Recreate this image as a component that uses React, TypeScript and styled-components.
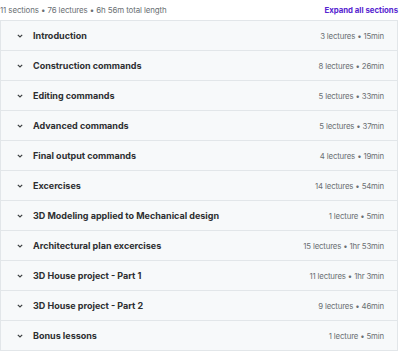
import React from "react";
import styled, { createGlobalStyle } from "styled-components";

const Global = createGlobalStyle`
  html, body { margin: 0; padding: 0; background: #ffffff; }
  body { font-family: Inter, "Noto Sans", sans-serif; color: #2d2f31; }
`;

const Wrap = styled.div`
  width: 398px;
  display: flex;
  flex-direction: column;
`;

const Header = styled.div`
  display: flex;
  align-items: center;
  justify-content: space-between;
  height: 20px;
`;

const Summary = styled.span`
  font-size: 7.9px;
  color: #6a6f73;
  letter-spacing: -0.1px;
`;

const Expand = styled.button`
  border: none;
  background: none;
  padding: 0;
  font-family: inherit;
  font-size: 7.8px;
  font-weight: 700;
  color: #5624d0;
`;

const List = styled.div`
  border: 1px solid #e2e6e9;
  border-bottom: none;
`;

const Row = styled.div`
  height: 29px;
  display: flex;
  align-items: center;
  background: #f7f9fa;
  border-bottom: 1px solid #e2e6e9;
  padding: 0 13px 0 16px;
`;

const Chevron = styled.svg`
  width: 6px;
  height: 6px;
  flex: none;
  margin-right: 10px;
`;

const Title = styled.span`
  flex: 1;
  font-size: 9px;
  font-weight: 700;
  color: #2d2f31;
`;

const Meta = styled.span`
  font-size: 7.8px;
  color: #6a6f73;
  letter-spacing: -0.15px;
`;

const sections: [string, string][] = [
  ["Introduction", "3 lectures • 15min"],
  ["Construction commands", "8 lectures • 26min"],
  ["Editing commands", "5 lectures • 33min"],
  ["Advanced commands", "5 lectures • 37min"],
  ["Final output commands", "4 lectures • 19min"],
  ["Excercises", "14 lectures • 54min"],
  ["3D Modeling applied to Mechanical design", "1 lecture • 5min"],
  ["Architectural plan excercises", "15 lectures • 1hr 53min"],
  ["3D House project - Part 1", "11 lectures • 1hr 3min"],
  ["3D House project - Part 2", "9 lectures • 46min"],
  ["Bonus lessons", "1 lecture • 5min"],
];

export default function App() {
  return (
    <>
      <Global />
      <Wrap>
        <Header>
          <Summary>11 sections • 76 lectures • 6h 56m total length</Summary>
          <Expand>Expand all sections</Expand>
        </Header>
        <List>
          {sections.map(([t, m]) => (
            <Row key={t}>
              <Chevron viewBox="0 0 6 6">
                <path d="M0.8 1.8 L3 4 L5.2 1.8" fill="none" stroke="#3e4143" strokeWidth="1.2" />
              </Chevron>
              <Title>{t}</Title>
              <Meta>{m}</Meta>
            </Row>
          ))}
        </List>
      </Wrap>
    </>
  );
}
